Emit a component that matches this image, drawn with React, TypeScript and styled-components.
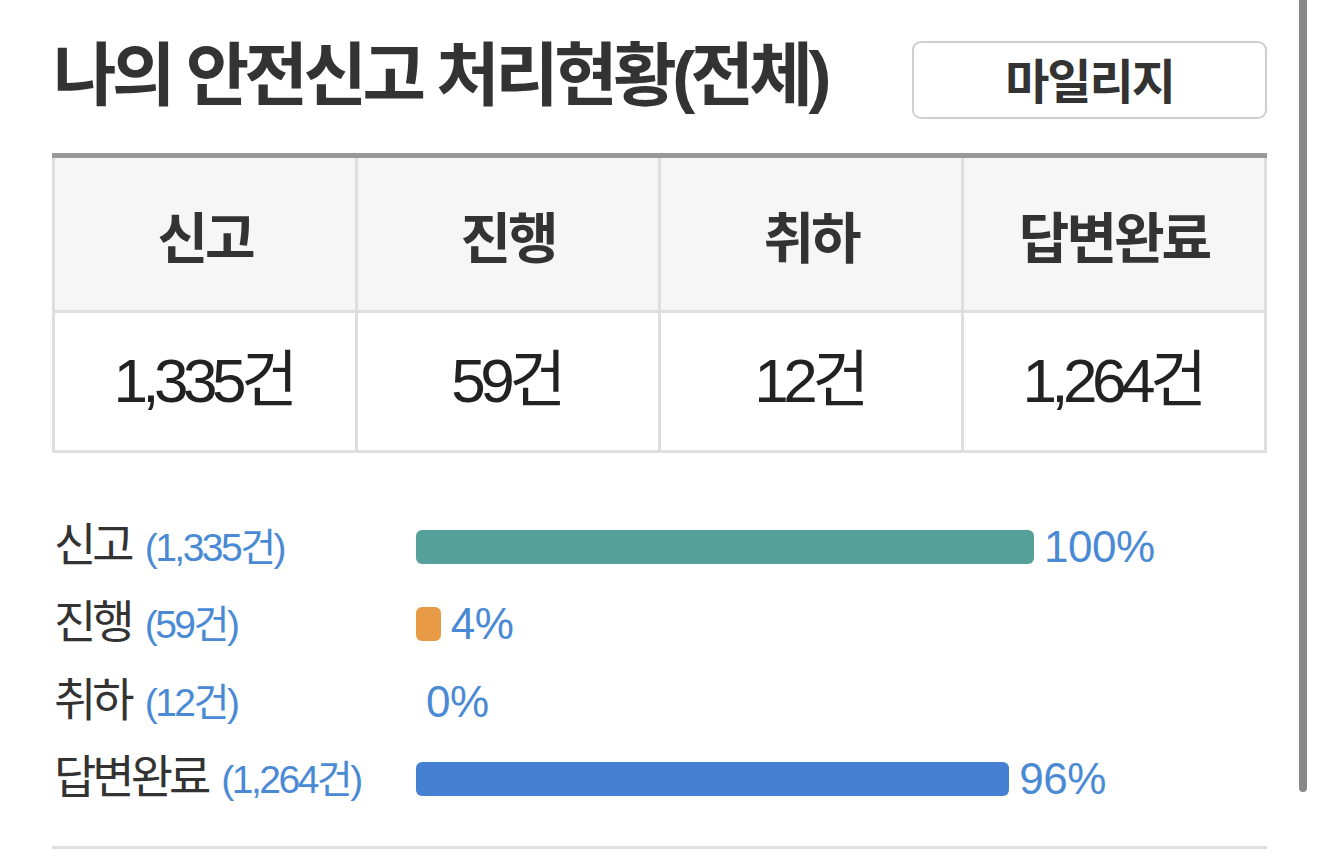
import React from "react";
import styled, { createGlobalStyle } from "styled-components";

const Global = createGlobalStyle`
  html, body { margin: 0; padding: 0; background: #fff; }
  body {
    font-family: "Liberation Sans", "Noto Sans CJK KR", sans-serif;
    color: #333;
    overflow: hidden;
  }
`;

const Page = styled.div`
  position: relative;
  width: 1320px;
  height: 861px;
  box-sizing: border-box;
  padding: 0 53px 0 52px;
`;

const Scrollbar = styled.div`
  position: absolute;
  top: 0;
  right: 13px;
  width: 8px;
  height: 792px;
  background: #888;
  border-radius: 0 0 4px 4px;
`;

const TitleRow = styled.div`
  display: flex;
  align-items: center;
  justify-content: space-between;
  height: 153px;
`;

const Title = styled.h1`
  margin: 0 0 0 1px;
  font-size: 69px;
  font-weight: 700;
  letter-spacing: -4.5px;
  color: #333;
  line-height: 1;
  padding-bottom: 0;
`;

const MileageButton = styled.button`
  width: 355px;
  height: 78px;
  margin-top: 7px;
  border: 2px solid #cfcfcf;
  border-radius: 9px;
  background: #fff;
  font-family: "Liberation Sans", "Noto Sans CJK KR", sans-serif;
  font-size: 48px;
  font-weight: 700;
  letter-spacing: -2px;
  color: #333;
  padding: 0 0 4px 0;
`;

const Table = styled.div`
  display: grid;
  grid-template-columns: repeat(4, 1fr);
  grid-template-rows: 152px 137px;
  gap: 3px;
  padding: 0 3px 3px 3px;
  background: #dedede;
  border-top: 5px solid #999;
`;

const Cell = styled.div<{ $head?: boolean }>`
  display: flex;
  align-items: center;
  justify-content: center;
  background: ${(p) => (p.$head ? "#f6f6f6" : "#fff")};
  color: ${(p) => (p.$head ? "#333" : "#222")};
  font-size: ${(p) => (p.$head ? "55px" : "62px")};
  font-weight: ${(p) => (p.$head ? 700 : 400)};
  letter-spacing: ${(p) => (p.$head ? "-3px" : "-5.5px")};
  padding: ${(p) => (p.$head ? "0" : "0 4px 14px 0")};
`;

const Bars = styled.div`
  display: flex;
  flex-direction: column;
  padding-top: 55px;
`;

const BarRow = styled.div`
  display: grid;
  grid-template-columns: 364px 1fr;
  align-items: center;
  height: 77.5px;
`;

const Label = styled.div`
  font-size: 46px;
  letter-spacing: -4px;
  color: #333;
  padding-left: 2px;
  white-space: nowrap;
  line-height: 1;
  padding-bottom: 4px;
`;

const Count = styled.span`
  font-size: 39px;
  letter-spacing: -2.5px;
  color: #4a8ad4;
  margin-left: 14px;
`;

const Track = styled.div`
  display: flex;
  align-items: center;
`;

const Fill = styled.div<{ $color: string }>`
  height: 34px;
  border-radius: 6px;
  background: ${(p) => p.$color};
`;

const Percent = styled.span`
  font-size: 44px;
  color: #4a8ad4;
  margin-left: 10px;
  letter-spacing: -0.5px;
`;

const Divider = styled.div`
  margin-top: 28px;
  height: 3px;
  background: #dedede;
`;

const heads = ["신고", "진행", "취하", "답변완료"];
const values = ["1,335건", "59건", "12건", "1,264건"];

const rows = [
  { label: "신고", count: "(1,335건)", pct: 100, color: "#55a09a" },
  { label: "진행", count: "(59건)", pct: 4, color: "#e99a45" },
  { label: "취하", count: "(12건)", pct: 0, color: "#e99a45" },
  { label: "답변완료", count: "(1,264건)", pct: 96, color: "#4580d2" },
];

const MAX = 618;

export default function App() {
  return (
    <>
      <Global />
      <Page>
        <TitleRow>
          <Title>나의 안전신고 처리현황(전체)</Title>
          <MileageButton>마일리지</MileageButton>
        </TitleRow>
        <Table>
          {heads.map((h) => (
            <Cell $head key={h}>
              {h}
            </Cell>
          ))}
          {values.map((v) => (
            <Cell key={v}>{v}</Cell>
          ))}
        </Table>
        <Bars>
          {rows.map((r) => (
            <BarRow key={r.label}>
              <Label>
                {r.label}
                <Count>{r.count}</Count>
              </Label>
              <Track>
                {r.pct > 0 && (
                  <Fill
                    $color={r.color}
                    style={{ width: Math.max((MAX * r.pct) / 100, 24) }}
                  />
                )}
                <Percent>{r.pct}%</Percent>
              </Track>
            </BarRow>
          ))}
        </Bars>
        <Divider />
        <Scrollbar />
      </Page>
    </>
  );
}
